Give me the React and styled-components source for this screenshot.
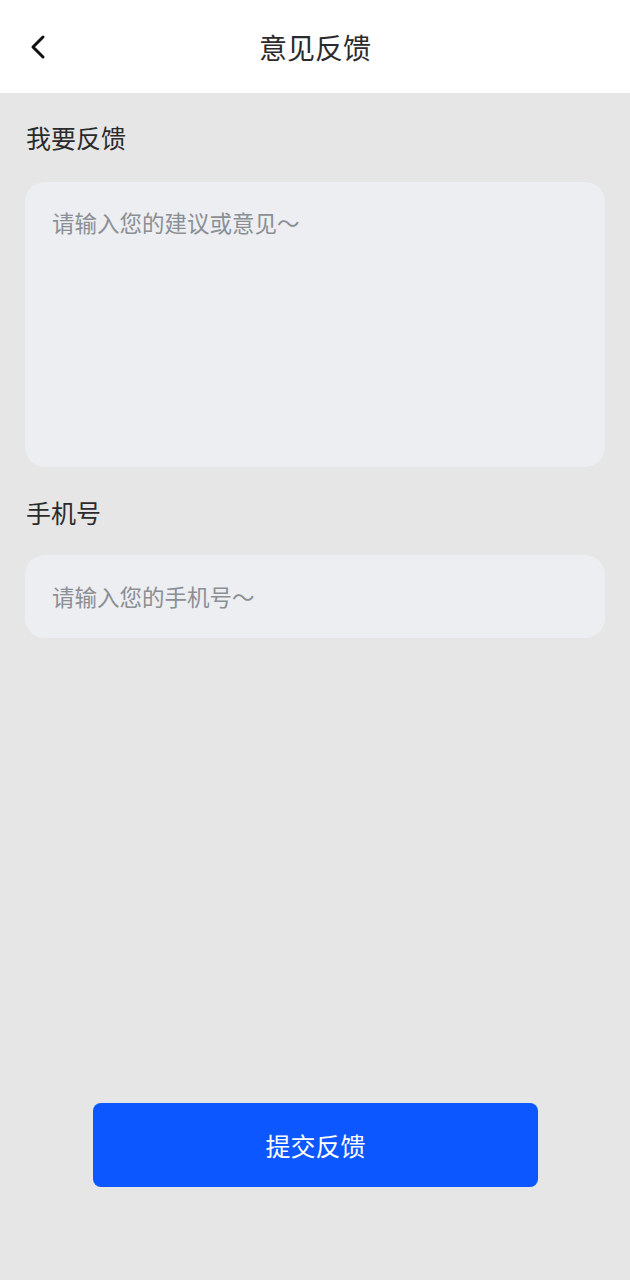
import styled, { createGlobalStyle } from "styled-components";

const GlobalStyle = createGlobalStyle`
  html, body {
    margin: 0;
    padding: 0;
    background: #e6e6e6;
    font-family: "Noto Sans CJK SC", "Noto Sans", sans-serif;
  }
  * { box-sizing: border-box; }
`;

const Page = styled.div`
  min-height: 1280px;
  display: flex;
  flex-direction: column;
  background: #e6e6e6;
`;

const TopBar = styled.header`
  height: 93px;
  background: #fff;
  display: grid;
  grid-template-columns: 80px 1fr 80px;
  align-items: center;
`;

const BackButton = styled.button`
  border: 0;
  background: none;
  padding: 0 0 0 28px;
  display: flex;
  align-items: center;
  height: 100%;
`;

const Title = styled.h1`
  margin: 0;
  text-align: center;
  font-size: 28px;
  font-weight: 400;
  color: #2b2b2b;
`;

const Body = styled.main`
  flex: 1;
  display: flex;
  flex-direction: column;
  padding: 24px 25px 0;
`;

const Label = styled.div`
  font-size: 25px;
  color: #2b2b2b;
  line-height: 40px;
  padding-left: 1px;
  margin-bottom: ${(p) => p.$gap}px;
`;

const Field = styled.div`
  background: #eceef1;
  border-radius: 20px;
  height: ${(p) => p.$height}px;
  padding: ${(p) => p.$padTop}px 27px 0;
  font-size: 22.5px;
  color: #8b8e94;
  line-height: 30px;
  margin-bottom: ${(p) => p.$after || 0}px;
`;

const Footer = styled.div`
  display: flex;
  justify-content: center;
  padding: 0 0 93px;
  margin-top: auto;
`;

const SubmitButton = styled.button`
  width: 445px;
  height: 84px;
  margin-left: 1px;
  border: 0;
  border-radius: 8px;
  background: #0c57ff;
  color: #fff;
  font-family: inherit;
  font-size: 25px;
`;

export default function App() {
  return (
    <Page>
      <GlobalStyle />
      <TopBar>
        <BackButton aria-label="back">
          <svg width="20" height="26" viewBox="0 0 20 26">
            <path d="M15 3 L5 13 L15 23" fill="none" stroke="#111" strokeWidth="3" strokeLinecap="round" strokeLinejoin="round" />
          </svg>
        </BackButton>
        <Title>意见反馈</Title>
        <span />
      </TopBar>
      <Body>
        <Label $gap={25}>我要反馈</Label>
        <Field $height={285} $padTop={25} $after={25}>请输入您的建议或意见～</Field>
        <Label $gap={23}>手机号</Label>
        <Field $height={83} $padTop={26}>请输入您的手机号～</Field>
      </Body>
      <Footer>
        <SubmitButton>提交反馈</SubmitButton>
      </Footer>
    </Page>
  );
}
